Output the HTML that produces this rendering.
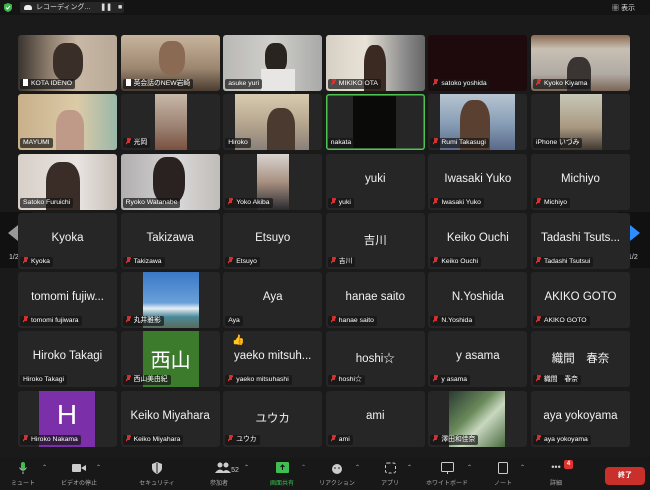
<!DOCTYPE html>
<html><head><meta charset="utf-8">
<style>
*{margin:0;padding:0;box-sizing:border-box}
body{width:650px;height:490px;background:#1a1a1a;overflow:hidden;position:relative;font-family:"Liberation Sans","Noto Sans CJK JP",sans-serif;color:#fff}
.top{position:absolute;left:0;top:0;width:650px;height:15px;background:#141414}
.rec{position:absolute;left:20px;top:2px;height:11px;width:104px;background:#262626;border-radius:2px;font-size:7px;line-height:11px;padding-left:16px;color:#ddd}
.grid{position:absolute;left:18px;top:35px;display:grid;grid-template-columns:repeat(6,99px);grid-template-rows:repeat(7,56px);column-gap:3.6px;row-gap:3.3px}
.t{position:relative;background:#262626;border-radius:3px;overflow:hidden}
.n{position:absolute;left:0;right:0;top:19px;text-align:center;font-size:11.5px;white-space:nowrap;color:#f2f2f2}
.l{position:absolute;left:2px;bottom:2px;background:rgba(20,20,20,.7);font-size:6.8px;line-height:10px;padding:0 3px 0 3px;border-radius:2px;white-space:nowrap;color:#fff}
.l i{display:inline-block;width:5px;height:7px;margin-right:3px;vertical-align:-1px;background:linear-gradient(135deg,transparent 40%,#e03030 40%,#e03030 58%,transparent 58%),linear-gradient(#c93030,#c93030) 1px 0/3px 5px no-repeat}
.v{position:absolute;top:0;bottom:0}
.nav{position:absolute;top:212px;width:32px;height:56px;background:#111}
.tb{position:absolute;left:0;top:458px;width:650px;height:32px;background:#181818}
.it{position:absolute;top:4px;text-align:center;font-size:6px;color:#aaa;width:60px}
.ic{height:12px;margin:0 auto 4px;}
.car{position:absolute;top:6px;font-size:6px;color:#bbb}
</style></head><body>
<div class="top">
<svg style="position:absolute;left:4px;top:3px" width="8" height="9"><path d="M4 0L8 1.5V5C8 7 6 8.5 4 9 2 8.5 0 7 0 5V1.5Z" fill="#3db54a"/><path d="M2 4.5L3.5 6 6 3" stroke="#fff" fill="none" stroke-width="1"/></svg>
<div class="rec"><span style="position:absolute;left:4px;top:3px;width:8px;height:5px;background:#eee;border-radius:3px 3px 1px 1px"></span>レコーディング... <span style="margin-left:8px;font-weight:bold">❚❚</span> <span style="margin-left:4px">■</span></div>
<div style="position:absolute;left:612px;top:3px;font-size:7px;color:#ddd">▦ 表示</div>
</div>
<div class="nav" style="left:0"><div style="position:absolute;left:8px;top:13px;width:0;height:0;border-top:8px solid transparent;border-bottom:8px solid transparent;border-right:10px solid #999"></div><div style="position:absolute;left:9px;top:42px;font-size:7px;color:#ddd">1/2</div></div>
<div class="nav" style="left:618px"><div style="position:absolute;left:12px;top:13px;width:0;height:0;border-top:8px solid transparent;border-bottom:8px solid transparent;border-left:10px solid #2d8cff"></div><div style="position:absolute;left:10px;top:42px;font-size:7px;color:#ddd">1/2</div></div>
<div class="grid">
<div class="t" style="background:linear-gradient(90deg,#3a3430 0,#8a7a6a 30%,#c9b8a5 60%,#b8a897)"><div class="v" style="left:35px;width:30px;top:8px;bottom:10px;background:#3a2e28;border-radius:40%"></div><div class="l"><i style="background:#fff"></i>KOTA IDENO</div></div>
<div class="t" style="background:linear-gradient(180deg,#c8b49c,#9c8670 60%,#4a3c30)"><div class="v" style="left:38px;width:26px;top:6px;bottom:16px;background:#8a6a52;border-radius:40%"></div><div class="l"><i style="background:#fff"></i>英会話のNEW岩崎</div></div>
<div class="t" style="background:linear-gradient(90deg,#b8b8b4,#d0cfcb 50%,#a9aaa8)"><div class="v" style="left:42px;width:22px;top:8px;bottom:18px;background:#2a2420;border-radius:40%"></div><div class="v" style="left:38px;width:34px;top:34px;background:#e8e6e4"></div><div class="l">asuke yuri</div></div>
<div class="t" style="background:linear-gradient(90deg,#d6d0c4,#e8e2d8 40%,#8a8a8a 80%,#666)"><div class="v" style="left:38px;width:22px;top:10px;background:#3a2a22;border-radius:40% 40% 0 0"></div><div class="l"><i></i>MIKIKO OTA</div></div>
<div class="t" style="background:#1e0a0c"><div class="l"><i></i>satoko yoshida</div></div>
<div class="t" style="background:linear-gradient(180deg,#8a6a52 0,#c8c0b4 25%,#b0aaa4 70%,#7a6656)"><div class="v" style="left:36px;width:24px;top:22px;background:#3a3432;border-radius:40% 40% 0 0"></div><div class="l"><i></i>Kyoko Kiyama</div></div>

<div class="t" style="background:linear-gradient(90deg,#c8b08a,#dccaa8 60%,#9ab8a8)"><div class="v" style="left:38px;width:28px;top:16px;background:#c09a88;border-radius:40% 40% 0 0"></div><div class="l">MAYUMI</div></div>
<div class="t"><div class="v" style="left:34px;width:32px;background:linear-gradient(180deg,#c8b8a8,#9a8070 60%,#7a5040)"></div><div class="l"><i></i>光岡</div></div>
<div class="t"><div class="v" style="left:12px;width:74px;background:linear-gradient(180deg,#d8ccb0,#b8a890 50%,#8a8078)"></div><div class="v" style="left:44px;width:28px;top:14px;background:#4a3a30;border-radius:40% 40% 0 0"></div><div class="l">Hiroko</div></div>
<div class="t" style="background:#262626;box-shadow:inset 0 0 0 1.5px #4fc24f"><div class="v" style="left:27px;width:43px;top:2px;bottom:2px;background:#0a0a08"></div><div class="l">nakata</div></div>
<div class="t"><div class="v" style="left:12px;width:75px;background:linear-gradient(180deg,#b8c4d0,#8aa0b8 50%,#5a6a8a)"></div><div class="v" style="left:32px;width:30px;top:6px;background:#5a4030;border-radius:40% 40% 0 0"></div><div class="l"><i></i>Rumi Takasugi</div></div>
<div class="t"><div class="v" style="left:29px;width:42px;background:linear-gradient(180deg,#c8c8b8,#a89880 60%,#403830)"></div><div class="l">iPhone いづみ</div></div>

<div class="t" style="background:linear-gradient(90deg,#d8d0c8,#e8e4e0 60%,#c8c0b8)"><div class="v" style="left:28px;width:34px;top:8px;background:#3a2c26;border-radius:40% 40% 0 0"></div><div class="l">Satoko Furuichi</div></div>
<div class="t" style="background:linear-gradient(90deg,#b0aeae,#d8d6d6 60%,#c0bcb8)"><div class="v" style="left:32px;width:32px;top:3px;bottom:6px;background:#2a2220;border-radius:40%"></div><div class="l">Ryoko Watanabe</div></div>
<div class="t"><div class="v" style="left:34px;width:32px;background:linear-gradient(180deg,#d8d4d0,#a89080 50%,#2a2a30)"></div><div class="l"><i></i>Yoko Akiba</div></div>
<div class="t"><div class="n">yuki</div><div class="l"><i></i>yuki</div></div>
<div class="t"><div class="n">Iwasaki Yuko</div><div class="l"><i></i>Iwasaki Yuko</div></div>
<div class="t"><div class="n">Michiyo</div><div class="l"><i></i>Michiyo</div></div>

<div class="t"><div class="n">Kyoka</div><div class="l"><i></i>Kyoka</div></div>
<div class="t"><div class="n">Takizawa</div><div class="l"><i></i>Takizawa</div></div>
<div class="t"><div class="n">Etsuyo</div><div class="l"><i></i>Etsuyo</div></div>
<div class="t"><div class="n">吉川</div><div class="l"><i></i>吉川</div></div>
<div class="t"><div class="n">Keiko Ouchi</div><div class="l"><i></i>Keiko Ouchi</div></div>
<div class="t"><div class="n">Tadashi Tsuts...</div><div class="l"><i></i>Tadashi Tsutsui</div></div>

<div class="t"><div class="n">tomomi fujiw...</div><div class="l"><i></i>tomomi fujiwara</div></div>
<div class="t"><div class="v" style="left:22px;width:56px;background:linear-gradient(180deg,#3a78c8,#6aa0d8 55%,#e8eef4 65%,#4a8a9a 80%,#5a6a5a)"></div><div class="l"><i></i>丸井雅影</div></div>
<div class="t"><div class="n">Aya</div><div class="l">Aya</div></div>
<div class="t"><div class="n">hanae saito</div><div class="l"><i></i>hanae saito</div></div>
<div class="t"><div class="n">N.Yoshida</div><div class="l"><i></i>N.Yoshida</div></div>
<div class="t"><div class="n">AKIKO GOTO</div><div class="l"><i></i>AKIKO GOTO</div></div>

<div class="t"><div class="n">Hiroko Takagi</div><div class="l">Hiroko Takagi</div></div>
<div class="t"><div class="v" style="left:22px;width:56px;background:#3c7a2c"></div><div style="position:absolute;left:22px;width:56px;top:13px;text-align:center;font-size:20px;color:#fff;font-family:'Noto Sans CJK JP',sans-serif">西山</div><div class="l"><i></i>西山美由紀</div></div>
<div class="t"><div style="position:absolute;left:9px;top:4px;font-size:10px;color:#f0c040">👍</div><div class="n">yaeko mitsuh...</div><div class="l"><i></i>yaeko mitsuhashi</div></div>
<div class="t"><div class="n">hoshi☆</div><div class="l"><i></i>hoshi☆</div></div>
<div class="t"><div class="n">y asama</div><div class="l"><i></i>y asama</div></div>
<div class="t"><div class="n">織間　春奈</div><div class="l"><i></i>織間　春奈</div></div>

<div class="t"><div class="v" style="left:21px;width:56px;background:#7b2fa8"></div><div style="position:absolute;left:21px;width:56px;top:8px;text-align:center;font-size:28px;color:#fff">H</div><div class="l"><i></i>Hiroko Nakama</div></div>
<div class="t"><div class="n">Keiko Miyahara</div><div class="l"><i></i>Keiko Miyahara</div></div>
<div class="t"><div class="n">ユウカ</div><div class="l"><i></i>ユウカ</div></div>
<div class="t"><div class="n">ami</div><div class="l"><i></i>ami</div></div>
<div class="t"><div class="v" style="left:21px;width:56px;background:linear-gradient(135deg,#2a3a34,#6a8a5a 40%,#c8d8c0 60%,#4a6a40)"></div><div class="l"><i></i>澤田和佳奈</div></div>
<div class="t"><div class="n">aya yokoyama</div><div class="l"><i></i>aya yokoyama</div></div>
</div>

<div class="tb">
<div class="it" style="left:-7px"><div class="ic"><svg width="8" height="12"><rect x="2" y="0" width="4" height="8" rx="2" fill="#3fbf4f"/><path d="M0.5 5.5Q4 11 7.5 5.5M4 9.5V12" stroke="#bbb" fill="none"/></svg></div>ミュート</div><span class="car" style="left:42px">⌃</span>
<div class="it" style="left:49px"><div class="ic"><svg width="14" height="12"><rect x="0" y="2" width="9" height="8" rx="1" fill="#ccc"/><path d="M9 6L14 3V9Z" fill="#ccc"/></svg></div>ビデオの停止</div><span class="car" style="left:96px">⌃</span>
<div class="it" style="left:127px"><div class="ic"><svg width="10" height="12"><path d="M5 0L10 2V6C10 9 7 11 5 12 3 11 0 9 0 6V2Z" fill="#ccc"/><path d="M5 1V11" stroke="#181818"/></svg></div>セキュリティ</div>
<div class="it" style="left:189px"><div class="ic" style="font-size:7px;color:#ccc;padding-left:16px"><svg width="16" height="12" style="vertical-align:-2px"><circle cx="5" cy="3" r="2.5" fill="#ccc"/><circle cx="11" cy="3" r="2.5" fill="#ccc"/><path d="M0 11Q5 4 10 11ZM7 11Q11 5 16 11Z" fill="#ccc"/></svg>52</div>参加者</div><span class="car" style="left:244px">⌃</span>
<div class="it" style="left:252px;color:#3fbf4f"><div class="ic"><svg width="13" height="11"><rect width="13" height="11" rx="1" fill="#3fbf4f"/><path d="M6.5 8V3M4.5 5L6.5 3 8.5 5" stroke="#111" fill="none"/></svg></div>画面共有</div><span class="car" style="left:301px;color:#3fbf4f">⌃</span>
<div class="it" style="left:307px"><div class="ic"><svg width="12" height="12"><circle cx="6" cy="7" r="5" fill="#ccc"/><circle cx="4" cy="6" r=".8" fill="#181818"/><circle cx="8" cy="6" r=".8" fill="#181818"/></svg></div>リアクション</div><span class="car" style="left:355px">⌃</span>
<div class="it" style="left:360px"><div class="ic"><svg width="11" height="12"><rect x=".5" y="1" width="10" height="10" rx="2" fill="none" stroke="#ccc" stroke-dasharray="3 2"/></svg></div>アプリ</div><span class="car" style="left:407px">⌃</span>
<div class="it" style="left:417px"><div class="ic"><svg width="13" height="12"><rect x=".5" y=".5" width="12" height="9" rx="1" fill="none" stroke="#ccc"/><path d="M6.5 10V12" stroke="#ccc"/></svg></div>ホワイトボード</div><span class="car" style="left:467px">⌃</span>
<div class="it" style="left:473px"><div class="ic"><svg width="10" height="12"><rect x=".5" y=".5" width="9" height="11" rx="1" fill="none" stroke="#ccc"/></svg></div>ノート</div><span class="car" style="left:520px">⌃</span>
<div class="it" style="left:526px"><div class="ic" style="font-size:9px;color:#ccc;line-height:10px">•••</div>詳細</div>
<div style="position:absolute;left:564px;top:2px;width:9px;height:9px;border-radius:2px;background:#e0322e;font-size:6px;line-height:9px;text-align:center;font-weight:bold">4</div>
<div style="position:absolute;left:605px;top:9px;width:40px;height:18px;border-radius:4px;background:#c9302c;font-size:7px;line-height:18px;text-align:center;font-weight:bold">終了</div>
</div>
</body></html>
